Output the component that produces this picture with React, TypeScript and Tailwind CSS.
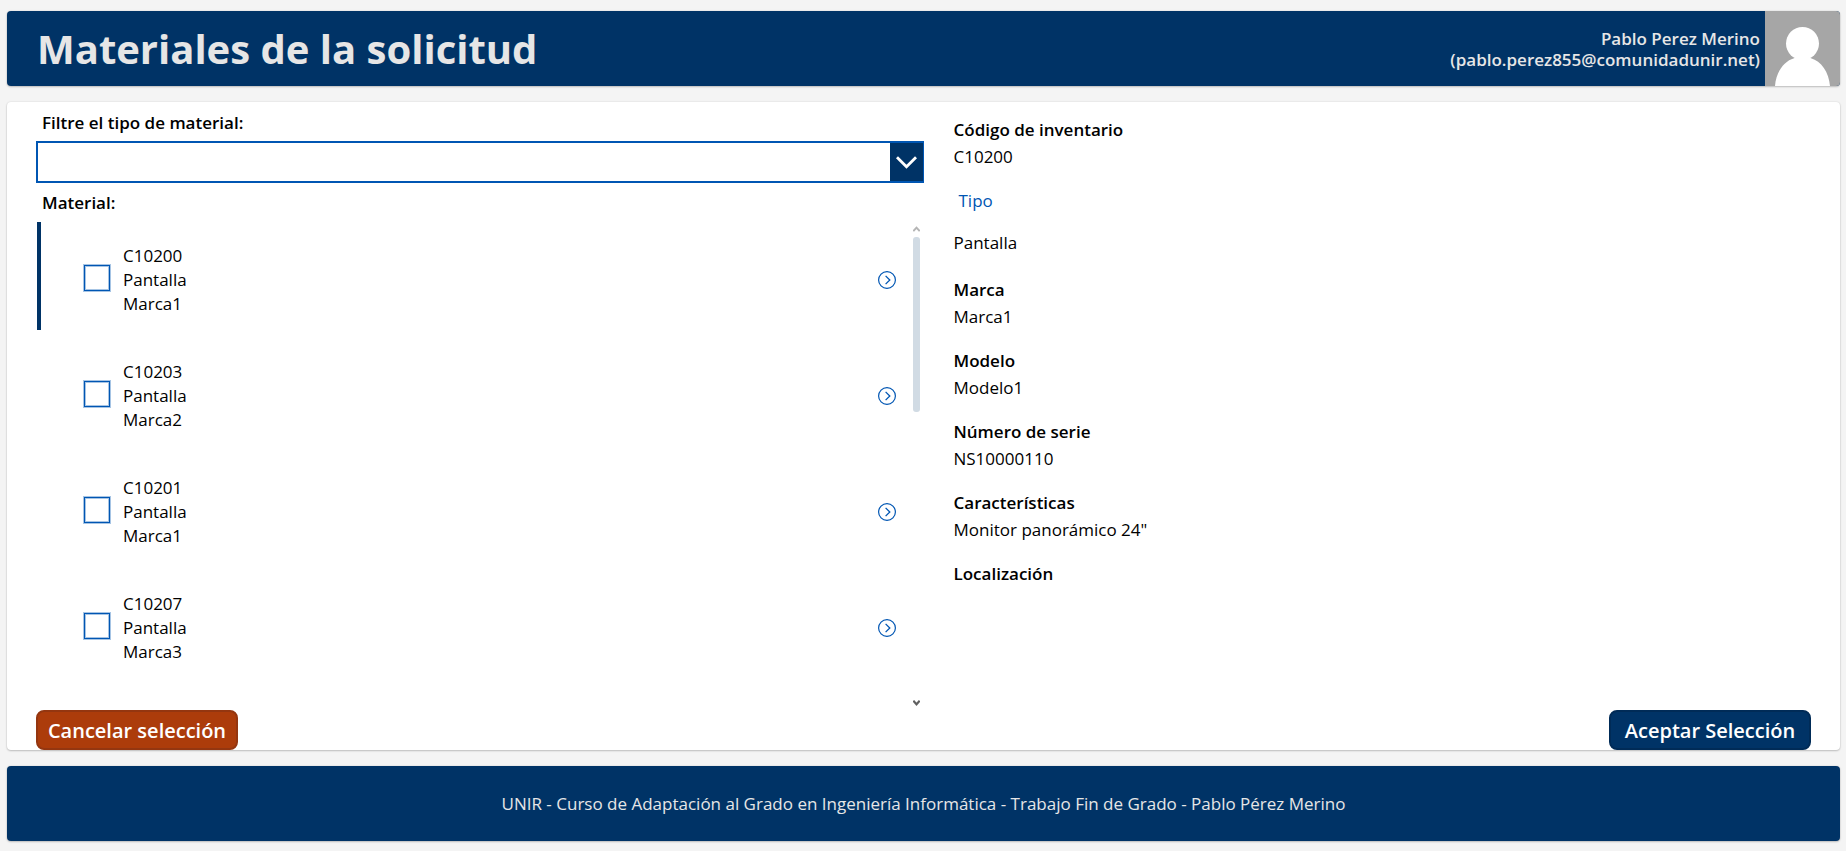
import { useState } from "react";

type Material = {
  codigo: string;
  tipo: string;
  marca: string;
};

const materiales: Material[] = [
  { codigo: "C10200", tipo: "Pantalla", marca: "Marca1" },
  { codigo: "C10203", tipo: "Pantalla", marca: "Marca2" },
  { codigo: "C10201", tipo: "Pantalla", marca: "Marca1" },
  { codigo: "C10207", tipo: "Pantalla", marca: "Marca3" },
];

function Header() {
  return (
    <header className="flex h-[75px] items-stretch overflow-hidden rounded bg-[#003366] text-[#e6e6e6] shadow-[0_0_2px_rgba(0,0,0,0.12),0_1px_2px_rgba(0,0,0,0.2)]">
      <h1 className="flex flex-1 items-center pl-[30px] text-[40px] font-bold">Materiales de la solicitud</h1>
      <p className="flex flex-col justify-center pr-[5px] text-right text-[17px] leading-[21px] font-semibold">
        <span>Pablo Perez Merino</span>
        <span>(pablo.perez855@comunidadunir.net)</span>
      </p>
      <svg viewBox="0 0 75 75" className="h-[75px] w-[75px] shrink-0" role="img" aria-label="Usuario">
        <rect width="75" height="75" fill="#a6a6a6" />
        <ellipse cx="37.5" cy="32.5" rx="16.5" ry="16.5" fill="#fff" />
        <path d="M10 75C11 61 19 50 29 47.200L31 46H44L46 47.200C56 50 64 61 65 75Z" fill="#fff" />
      </svg>
    </header>
  );
}

function TypeFilter() {
  return (
    <div className="relative">
      <select
        id="tipo-material"
        defaultValue=""
        className="block h-[42px] w-full appearance-none border-2 border-[#0056b3] bg-white pr-10 pl-2 text-[17px] outline-none"
      >
        <option value=""></option>
        <option value="pantalla">Pantalla</option>
      </select>
      <span className="pointer-events-none absolute top-[2px] right-[1px] bottom-[2px] flex w-[33px] items-center justify-center bg-[#003366]">
        <svg viewBox="0 0 22 13" className="h-[13px] w-[22px]" fill="none" stroke="#fff" strokeWidth="2.800" aria-hidden="true">
          <path d="M2 1.200L11.500 10.800L21 1.200" />
        </svg>
      </span>
    </div>
  );
}

function MaterialRow({ material, selected, onSelect }: { material: Material; selected: boolean; onSelect: () => void }) {
  return (
    <li
      className={
        selected
          ? "flex h-[108px] items-center border-l-4 border-[#003366] pt-1 pl-[43px]"
          : "flex h-[108px] items-center border-l-4 border-transparent pt-1 pl-[43px]"
      }
    >
      <label className="flex flex-1 items-center gap-[13px]">
        <input
          type="checkbox"
          className="size-[26px] shrink-0 appearance-none border border-[#0056b3] bg-white shadow-[0_0_0_1px_#a6c4e4,inset_0_0_0_1px_#a6c4e4] checked:bg-[#0056b3]"
        />
        <span className="flex flex-col pt-1 text-[17px] leading-6">
          <span>{material.codigo}</span>
          <span>{material.tipo}</span>
          <span>{material.marca}</span>
        </span>
      </label>
      <button type="button" onClick={onSelect} aria-label={`Ver ${material.codigo}`} className="pt-1">
        <svg viewBox="0 0 18 18" className="size-[18px]" fill="none" stroke="#0056b3" aria-hidden="true">
          <circle cx="9" cy="9" r="8.400" strokeWidth="1.200" />
          <path d="M7.600 4.900L11.800 9L7.600 13.100" strokeWidth="1.300" />
        </svg>
      </button>
    </li>
  );
}

function ScrollRail() {
  return (
    <div className="flex w-[7px] flex-col items-center py-1" aria-hidden="true">
      <svg viewBox="0 0 7 6" className="h-[6px] w-[7px]" fill="none" stroke="#b5b5b5" strokeWidth="2">
        <path d="M0.300 5.200L3.500 1.700L6.700 5.200" />
      </svg>
      <span className="mt-[5px] h-[175px] w-full rounded-[3px] bg-[#d1dbe4]" />
      <svg viewBox="0 0 7 6" className="mt-auto h-[6px] w-[7px]" fill="none" stroke="#606060" strokeWidth="2.200">
        <path d="M0.300 0.800L3.500 4.300L6.700 0.800" />
      </svg>
    </div>
  );
}

function Field({ label, value }: { label: string; value: string }) {
  return (
    <div>
      <dt className="font-semibold">{label}</dt>
      <dd className="min-h-[27px]">{value}</dd>
    </div>
  );
}

function Details() {
  return (
    <dl className="flex flex-col gap-[17px] pt-[14px] pl-[30px] text-[17px] leading-[27px]">
      <Field label="Código de inventario" value="C10200" />
      <div className="flex flex-col gap-[15px] pb-[3px]">
        <dt className="pl-[5px] text-[#0056b3]">Tipo</dt>
        <dd>Pantalla</dd>
      </div>
      <Field label="Marca" value="Marca1" />
      <Field label="Modelo" value="Modelo1" />
      <Field label="Número de serie" value="NS10000110" />
      <Field label="Características" value={'Monitor panorámico 24"'} />
      <Field label="Localización" value="" />
    </dl>
  );
}

export default function App() {
  const [selected, setSelected] = useState(0);

  return (
    <div className="flex min-h-screen flex-col gap-4 bg-[#f4f4f4] pt-[11px] pr-[6px] pb-[10px] pl-[7px] font-['Open_Sans',sans-serif] text-black">
      <Header />

      <main className="flex flex-1 flex-col rounded bg-white px-[29px] shadow-[0_0_2px_rgba(0,0,0,0.12),0_1px_2px_rgba(0,0,0,0.2)]">
        <div className="grid flex-1 grid-cols-2">
          <section className="flex flex-col">
            <label htmlFor="tipo-material" className="flex h-[39px] items-center pt-[2px] pl-[6px] text-[17px] font-semibold">
              Filtre el tipo de material:
            </label>
            <TypeFilter />
            <h2 className="flex h-[39px] items-center pl-[6px] text-[17px] font-semibold">Material:</h2>
            <div className="flex flex-1 gap-[17px] pr-1 pl-[1px]">
              <ul className="flex flex-1 flex-col gap-2">
                {materiales.map((m, i) => (
                  <MaterialRow key={m.codigo} material={m} selected={i === selected} onSelect={() => setSelected(i)} />
                ))}
              </ul>
              <ScrollRail />
            </div>
          </section>
          <Details />
        </div>
        <div className="flex justify-between">
          <button
            type="button"
            className="h-10 w-[202px] rounded-[8px] border-2 border-[#943610] bg-[#ac3c0b] pt-[2px] text-[20px] leading-7 font-semibold text-white"
          >
            Cancelar selección
          </button>
          <button
            type="button"
            className="h-10 w-[202px] rounded-[8px] border-2 border-[#002b57] bg-[#003366] pt-[2px] text-[20px] leading-7 font-semibold text-white"
          >
            Aceptar Selección
          </button>
        </div>
      </main>

      <footer className="flex h-[75px] items-center justify-center rounded bg-[#003366] text-[17px] text-[#e6e6e6] shadow-[0_0_2px_rgba(0,0,0,0.12),0_1px_2px_rgba(0,0,0,0.2)]">
        UNIR - Curso de Adaptación al Grado en Ingeniería Informática - Trabajo Fin de Grado - Pablo Pérez Merino
      </footer>
    </div>
  );
}
